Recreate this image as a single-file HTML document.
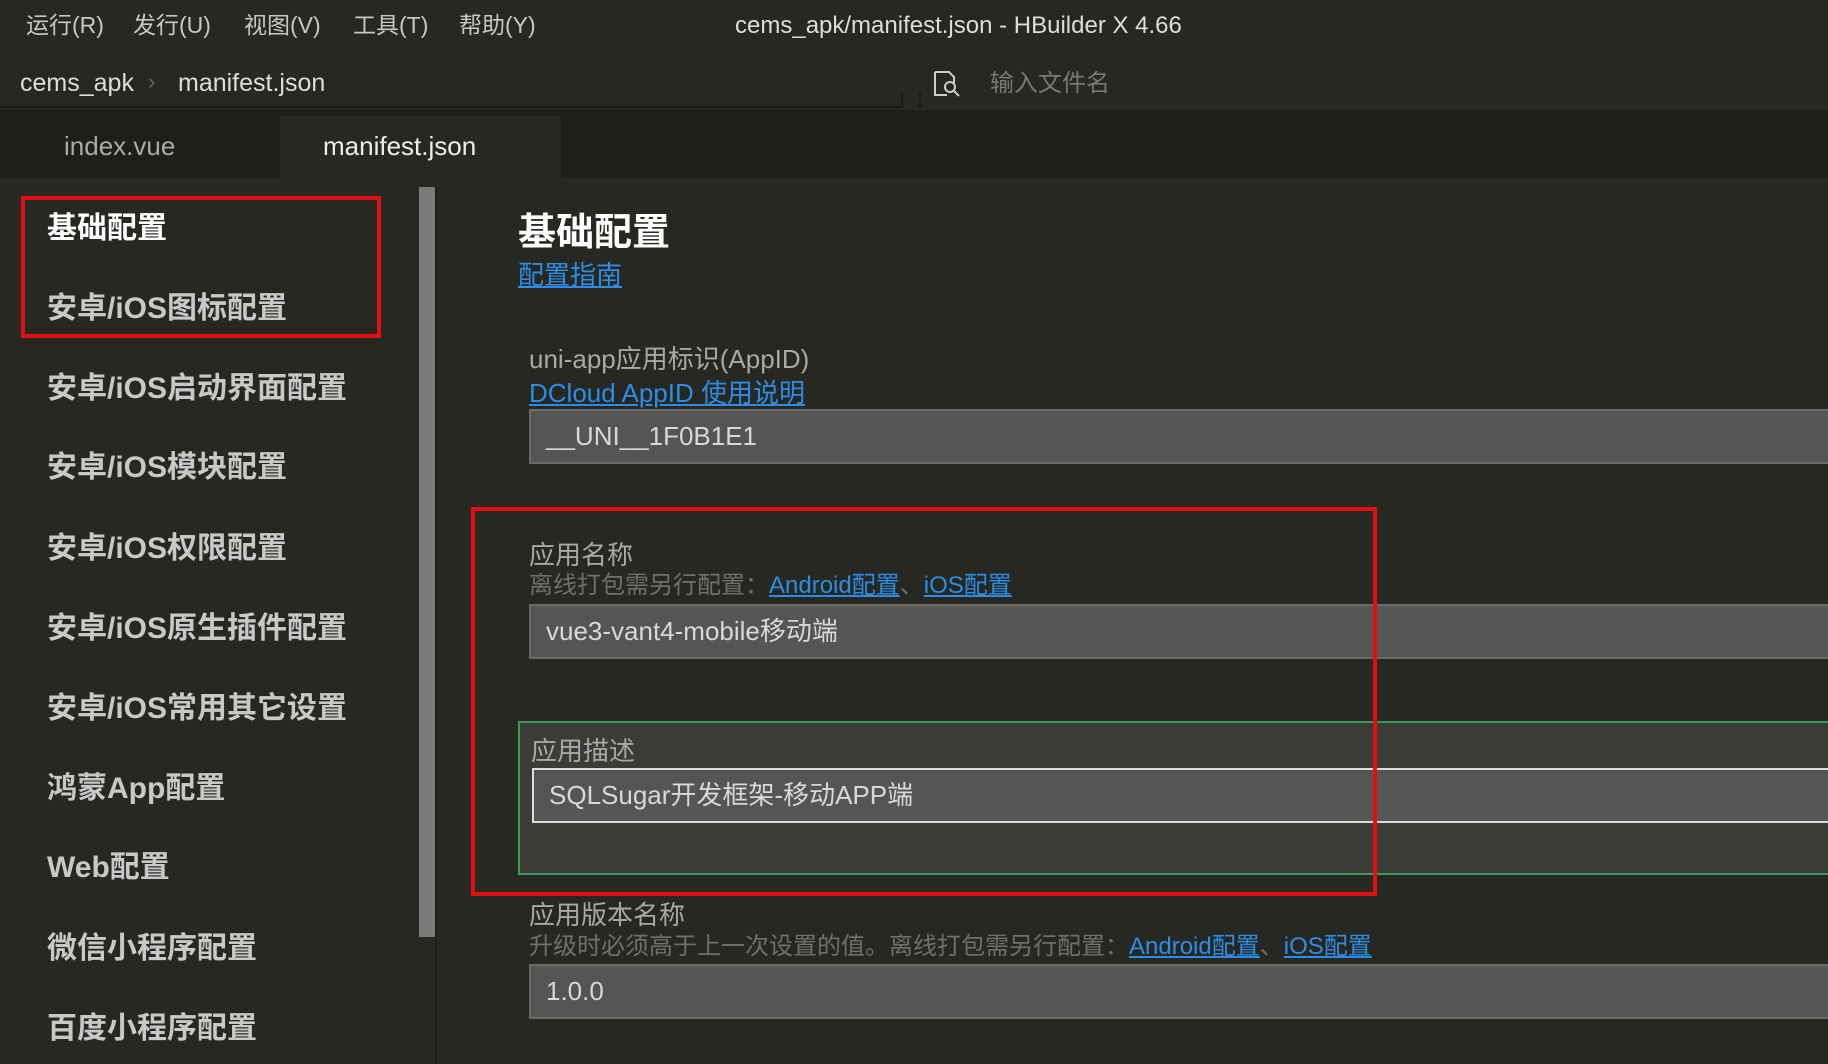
<!DOCTYPE html>
<html><head><meta charset="utf-8"><style>
*{margin:0;padding:0;box-sizing:border-box}
body{width:1828px;height:1064px;background:#272822;overflow:hidden;position:relative;font-family:"Liberation Sans","Noto Sans CJK SC",sans-serif;color:#ccc}
.a{position:absolute;white-space:nowrap;line-height:1}
.m{font-size:23px;color:#c8c8c8;top:14px}
.lnk{color:#2b8de6;text-decoration:underline}
.side{font-size:30px;font-weight:bold;color:#c8c8c8;left:47px}
.lbl{font-size:26px;color:#a8a8a8;left:529px}
.hint{font-size:24px;color:#6f6f6f;left:529px}
.inp{position:absolute;left:529px;right:-10px;height:55px;background:#555;border:2px solid #6a6a6a}
.inp span{position:absolute;left:15px;top:7px;font-size:26px;color:#d8d8d8;white-space:nowrap;line-height:1.4}
</style></head><body>
<div class="a m" style="left:26px">运行(R)</div>
<div class="a m" style="left:133px">发行(U)</div>
<div class="a m" style="left:244px">视图(V)</div>
<div class="a m" style="left:353px">工具(T)</div>
<div class="a m" style="left:459px">帮助(Y)</div>
<div class="a" style="left:735px;top:14px;font-size:24px;color:#ddd">cems_apk/manifest.json - HBuilder X 4.66</div>

<div class="a" style="left:20px;top:71px;font-size:25px;color:#ddd">cems_apk</div>
<div class="a" style="left:148px;top:71px;font-size:22px;color:#666">›</div>
<div class="a" style="left:178px;top:71px;font-size:25px;color:#ddd">manifest.json</div>
<div style="position:absolute;left:0;top:106px;width:903px;height:2px;background:#1a1a18"></div>
<div style="position:absolute;left:901px;top:92px;width:2px;height:16px;background:#1a1a18"></div>
<div style="position:absolute;left:919px;top:92px;width:2px;height:16px;background:#1a1a18"></div>
<svg style="position:absolute;left:933px;top:70px" width="30" height="28" viewBox="0 0 30 28" fill="none" stroke="#ccc" stroke-width="2"><path d="M2 2h14l5 5v6M2 2v23h12"/><circle cx="17" cy="17" r="5"/><path d="M21 21l5 5"/></svg>
<div class="a" style="left:990px;top:72px;font-size:24px;color:#777">输入文件名</div>

<div style="position:absolute;left:0;top:110px;width:1828px;height:68px;background:#1e1f1b"></div>
<div style="position:absolute;left:280px;top:116px;width:281px;height:62px;background:#272822"></div>
<div class="a" style="left:64px;top:133px;font-size:26px;color:#aaa">index.vue</div>
<div class="a" style="left:323px;top:133px;font-size:26px;color:#eee">manifest.json</div>

<div class="a side" style="top:214px;color:#fff">基础配置</div>
<div class="a side" style="top:294px">安卓/iOS图标配置</div>
<div class="a side" style="top:374px">安卓/iOS启动界面配置</div>
<div class="a side" style="top:453px">安卓/iOS模块配置</div>
<div class="a side" style="top:534px">安卓/iOS权限配置</div>
<div class="a side" style="top:614px">安卓/iOS原生插件配置</div>
<div class="a side" style="top:694px">安卓/iOS常用其它设置</div>
<div class="a side" style="top:774px">鸿蒙App配置</div>
<div class="a side" style="top:853px">Web配置</div>
<div class="a side" style="top:934px">微信小程序配置</div>
<div class="a side" style="top:1014px">百度小程序配置</div>
<div style="position:absolute;left:21px;top:196px;width:360px;height:142px;border:4px solid #e10f0f"></div>
<div style="position:absolute;left:419px;top:187px;width:16px;height:750px;background:#7a7a7a"></div>
<div style="position:absolute;left:435px;top:187px;width:2px;height:877px;background:#1e1f1b"></div>

<div class="a" style="left:518px;top:214px;font-size:38px;font-weight:bold;color:#fff">基础配置</div>
<div class="a lnk" style="left:518px;top:262px;font-size:26px">配置指南</div>

<div class="a lbl" style="top:346px">uni-app应用标识(AppID)</div>
<div class="a lnk" style="left:529px;top:380px;font-size:26px">DCloud AppID 使用说明</div>
<div class="inp" style="top:409px"><span>__UNI__1F0B1E1</span></div>

<div class="a lbl" style="top:542px">应用名称</div>
<div class="a hint" style="top:574px">离线打包需另行配置：<span class="lnk">Android配置</span>、<span class="lnk">iOS配置</span></div>
<div class="inp" style="top:604px"><span>vue3-vant4-mobile移动端</span></div>

<div style="position:absolute;left:518px;top:721px;width:1320px;height:154px;background:#3b3b37;border:2px solid #3c9a5a"></div>
<div class="a lbl" style="left:531px;top:738px">应用描述</div>
<div class="inp" style="left:532px;top:768px;border-color:#ddd;height:55px"><span>SQLSugar开发框架-移动APP端</span></div>
<div style="position:absolute;left:471px;top:507px;width:906px;height:389px;border:4px solid #e10f0f"></div>

<div class="a lbl" style="top:902px">应用版本名称</div>
<div class="a hint" style="top:935px">升级时必须高于上一次设置的值。离线打包需另行配置：<span class="lnk">Android配置</span>、<span class="lnk">iOS配置</span></div>
<div class="inp" style="top:964px"><span>1.0.0</span></div>
</body></html>
